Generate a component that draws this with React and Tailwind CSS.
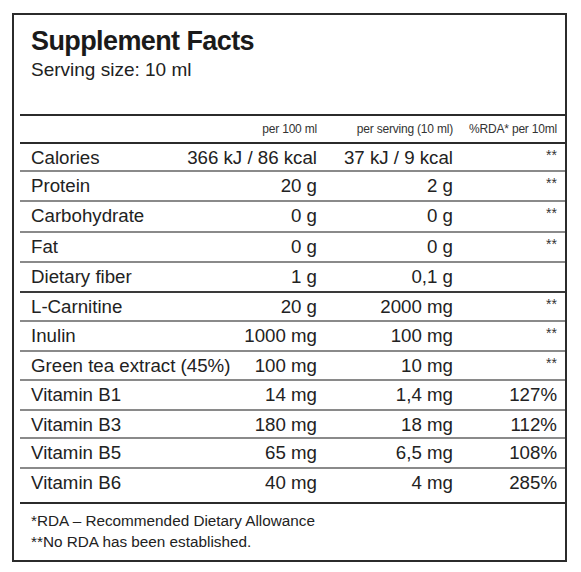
const rows = [
  { name: 'Calories', per100: '366 kJ / 86 kcal', perServing: '37 kJ / 9 kcal', rda: '**', h: 'h-[28px]' },
  { name: 'Protein', per100: '20 g', perServing: '2 g', rda: '**', h: 'h-[30px]' },
  { name: 'Carbohydrate', per100: '0 g', perServing: '0 g', rda: '**', h: 'h-[31px]' },
  { name: 'Fat', per100: '0 g', perServing: '0 g', rda: '**', h: 'h-[30px]' },
  { name: 'Dietary fiber', per100: '1 g', perServing: '0,1 g', rda: '', h: 'h-[30px]', dark: true },
  { name: 'L-Carnitine', per100: '20 g', perServing: '2000 mg', rda: '**', h: 'h-[29px]' },
  { name: 'Inulin', per100: '1000 mg', perServing: '100 mg', rda: '**', h: 'h-[30px]' },
  { name: 'Green tea extract (45%)', per100: '100 mg', perServing: '10 mg', rda: '**', h: 'h-[29px]' },
  { name: 'Vitamin B1', per100: '14 mg', perServing: '1,4 mg', rda: '127%', h: 'h-[30px]' },
  { name: 'Vitamin B3', per100: '180 mg', perServing: '18 mg', rda: '112%', h: 'h-[28px]' },
  { name: 'Vitamin B5', per100: '65 mg', perServing: '6,5 mg', rda: '108%', h: 'h-[30px]' },
  { name: 'Vitamin B6', per100: '40 mg', perServing: '4 mg', rda: '285%', h: 'h-[35px]', last: true },
]

function Row({ row }) {
  // darker separator under dietary fiber, thick one after the last row
  const border = row.last
    ? 'border-b-2 border-[#2b2b2b]'
    : row.dark
      ? 'border-b-2 border-[#3a3a3a]'
      : 'border-b-2 border-[#8a8a8a]'

  return (
    <div className={`flex items-start pl-[11px] pr-[8px] pt-[3px] text-[18.7px] leading-[22px] text-[#222] ${row.h} ${border}`}>
      <div className="flex-1 min-w-0 whitespace-nowrap">{row.name}</div>
      <div className="w-[90px] flex justify-end whitespace-nowrap">{row.per100}</div>
      <div className="w-[136px] flex justify-end whitespace-nowrap">{row.perServing}</div>
      <div className="w-[104px] flex justify-end whitespace-nowrap">
        {row.rda === '**' ? (
          <span className="text-[14px] leading-[16px] text-[#333]">**</span>
        ) : (
          row.rda
        )}
      </div>
    </div>
  )
}

export default function App() {
  return (
    <div
      className="w-full h-[572px] bg-white pt-[13px] pl-[12px]"
      style={{ fontFamily: '"Liberation Sans", Arial, sans-serif' }}
    >
      <div className="w-[555px] h-[549px] border-2 border-[#2b2b2b] pl-[6px]">
        <div className="h-[101px] border-b-2 border-[#2b2b2b] pl-[11px] pt-[11px]">
          <div className="text-[27px] leading-[30px] font-bold tracking-[-0.6px] text-[#1a1a1a]">
            Supplement Facts
          </div>
          <div className="mt-[3px] text-[19px] leading-[22px] text-[#222]">Serving size: 10 ml</div>
        </div>

        <div className="h-[28px] flex items-center pl-[11px] pr-[8px] border-b-2 border-[#2b2b2b] text-[12px] tracking-[-0.2px] text-[#333]">
          <div className="flex-1" />
          <div className="w-[90px] flex justify-end whitespace-nowrap">per 100 ml</div>
          <div className="w-[136px] flex justify-end whitespace-nowrap">per serving (10 ml)</div>
          <div className="w-[104px] flex justify-end whitespace-nowrap">%RDA* per 10ml</div>
        </div>

        {rows.map((row) => (
          <Row key={row.name} row={row} />
        ))}

        <div className="pl-[11px] pt-[6px] text-[15.3px] leading-[21px] text-[#222]">
          <div>*RDA – Recommended Dietary Allowance</div>
          <div>**No RDA has been established.</div>
        </div>
      </div>
    </div>
  )
}
